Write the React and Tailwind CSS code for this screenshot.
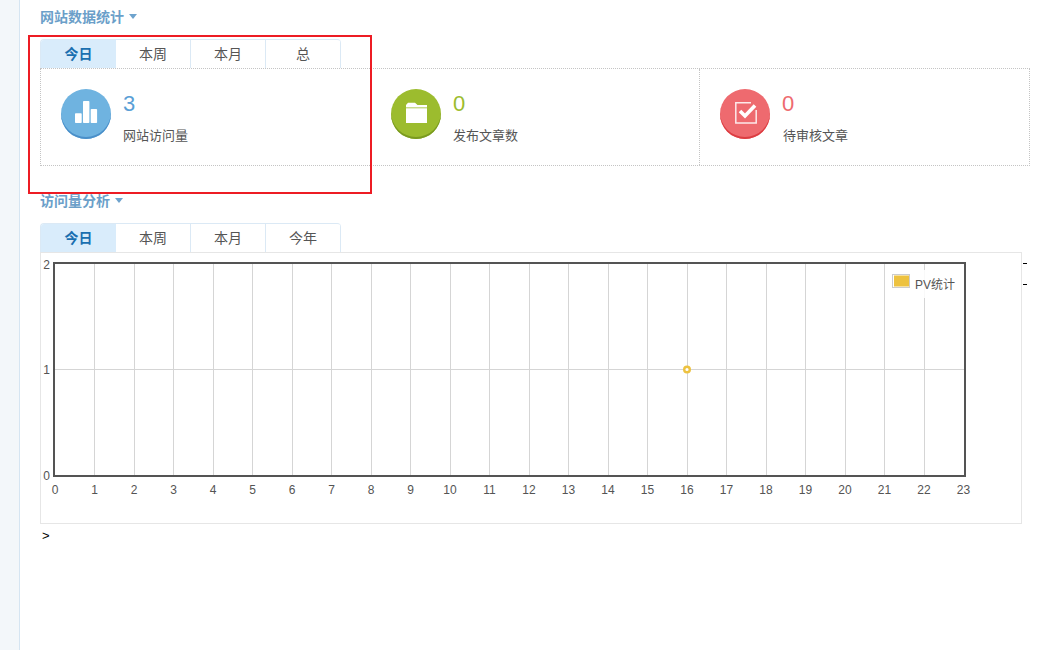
const FF = "font-['Liberation_Sans','Noto_Sans_CJK_SC',sans-serif]";

function Caret() {
  return <span className="ml-[5px] mt-[-2px] w-0 h-0 border-x-[4px] border-x-transparent border-t-[5px] border-t-[#6ea3cd]" />;
}

function Heading({ children, className }) {
  return (
    <div className={`flex items-center h-[20px] text-[14px] font-bold text-[#6b9fc9] ${className}`}>
      {children}
      <Caret />
    </div>
  );
}

function Tabs({ items }) {
  return (
    <div className="flex w-[301px] h-[29px] border-l border-t border-[#dbe9f5] rounded-t-[4px] overflow-hidden text-[14px] text-[#555]">
      {items.map((t, i) => (
        <div
          key={t}
          className={
            i === 0
              ? "w-[75px] flex items-center justify-center bg-[#d9ecfb] text-[#1a6fb0] font-bold"
              : "w-[75px] flex items-center justify-center border-r border-[#dbe9f5]"
          }
        >
          {t}
        </div>
      ))}
    </div>
  );
}

function BarsIcon() {
  return (
    <svg width="50" height="50" viewBox="0 0 50 50" fill="#fff">
      <rect x="14" y="24.3" width="6.7" height="9.7" rx="0.8" />
      <rect x="22" y="12" width="6.4" height="22" rx="0.8" />
      <rect x="29.7" y="20" width="6.4" height="14" rx="0.8" />
    </svg>
  );
}

function FolderIcon() {
  return (
    <svg width="50" height="50" viewBox="0 0 50 50" fill="#fff">
      <path d="M15 16 L17 13.7 H24 L26.5 16 H36 V18 H15 Z" />
      <rect x="15" y="18" width="21" height="1.3" fillOpacity="0.45" />
      <rect x="15" y="19.3" width="21" height="14.7" />
    </svg>
  );
}

function CheckIcon() {
  return (
    <svg width="50" height="50" viewBox="0 0 50 50" fill="none">
      <path d="M31 13.8 H15.8 V34 H36.2 V21" stroke="#fff" strokeOpacity="0.85" strokeWidth="1.5" />
      <path d="M20 22 L25 27 L35 16.5" stroke="#fff" strokeWidth="3.6" />
    </svg>
  );
}

function Stat({ width, bg, edge, color, value, label, icon, last }) {
  return (
    <div className={`${width} shrink-0 flex pl-[20px] pt-[20px] ${last ? "" : "border-r border-dotted border-[#c4c4c4]"}`}>
      <div className={`w-[50px] h-[50px] rounded-full shrink-0 ${bg} ${edge}`}>{icon}</div>
      <div className={last ? "ml-[13px]" : "ml-[12px]"}>
        <div className={`h-[29px] text-[22px] leading-[29px] ${last ? "ml-[-1px]" : ""} ${color}`}>{value}</div>
        <div className="mt-[8px] h-[20px] text-[13px] leading-[20px] text-[#555]">{label}</div>
      </div>
    </div>
  );
}

function Chart() {
  const gx = (h) => Math.floor(14 + 39.5 * h) + 0.5;
  const hours = Array.from({ length: 24 }, (_, i) => i);
  return (
    <svg width="980" height="270" className="block">
      {hours.slice(1, 23).map((h) => (
        <line key={h} x1={gx(h)} x2={gx(h)} y1="11" y2="223" stroke="#d5d5d5" strokeWidth="1" />
      ))}
      <line x1="14" x2="924" y1="116.5" y2="116.5" stroke="#d5d5d5" strokeWidth="1" />
      <rect x="13" y="10" width="911" height="213" fill="none" stroke="#545454" strokeWidth="2" />
      {hours.map((h) => (
        <text key={h} x={14 + 39.5 * h} y="241" textAnchor="middle" fontSize="12" fill="#545454" fontFamily="Liberation Sans">
          {h}
        </text>
      ))}
      {[["2", 16], ["1", 121], ["0", 227]].map(([t, y]) => (
        <text key={t} x="9" y={y} textAnchor="end" fontSize="12" fill="#545454" fontFamily="Liberation Sans">
          {t}
        </text>
      ))}
      <circle cx="646" cy="116.5" r="2.8" fill="#fff" stroke="#edc240" strokeWidth="2.4" />
      <rect x="847" y="17" width="70" height="28" fill="#fff" fillOpacity="0.85" />
      <rect x="851.5" y="21.5" width="17" height="13" fill="#fff" stroke="#ccc" />
      <rect x="853" y="22.5" width="15" height="11" fill="#edc240" />
      <text x="874" y="36" fontSize="12" fill="#545454" fontFamily="Liberation Sans, Noto Sans CJK SC">
        PV统计
      </text>
    </svg>
  );
}

export default function App() {
  return (
    <div className={`flex w-[1046px] h-[650px] bg-white overflow-hidden relative ${FF}`}>
      <div className="w-[20px] shrink-0 bg-[#f3f7fa] border-r border-[#d5e5f2]" />
      <div className="pl-[20px] flex-1">
        <Heading className="mt-[7px]">网站数据统计</Heading>
        <div className="mt-[12px]">
          <Tabs items={["今日", "本周", "本月", "总"]} />
        </div>
        <div className="flex w-[990px] h-[98px] border border-dotted border-[#c4c4c4]">
          <Stat
            width="w-[330px]"
            bg="bg-[#6fb3e0]"
            edge="shadow-[inset_0_-2px_0_#4a8fc9]"
            color="text-[#5a9fd6]"
            value="3"
            label="网站访问量"
            icon={<BarsIcon />}
          />
          <Stat
            width="w-[329px]"
            bg="bg-[#9cbc2e]"
            edge="shadow-[inset_0_-2px_0_#7a9a20]"
            color="text-[#9cbc2e]"
            value="0"
            label="发布文章数"
            icon={<FolderIcon />}
          />
          <Stat
            width="w-[329px]"
            bg="bg-[#ee6a6f]"
            edge="shadow-[inset_0_-2px_0_#dc3d42]"
            color="text-[#ee6a6f]"
            value="0"
            label="待审核文章"
            icon={<CheckIcon />}
            last
          />
        </div>
        <Heading className="mt-[25px]">访问量分析</Heading>
        <div className="mt-[12px]">
          <Tabs items={["今日", "本周", "本月", "今年"]} />
        </div>
        <div className="w-[982px] h-[272px] border border-[#e6e6e6]">
          <Chart />
        </div>
        <div className="mt-[3px] text-[13px] leading-[18px] text-black pl-[2px]">&gt;</div>
      </div>
      <div className="absolute left-[28px] top-[35px] w-[344px] h-[159px] border-2 border-[#ed1c24]" />
      <div className="absolute left-[1023px] top-[263px] w-[4px] h-px bg-black" />
      <div className="absolute left-[1023px] top-[284px] w-[4px] h-px bg-black" />
    </div>
  );
}
